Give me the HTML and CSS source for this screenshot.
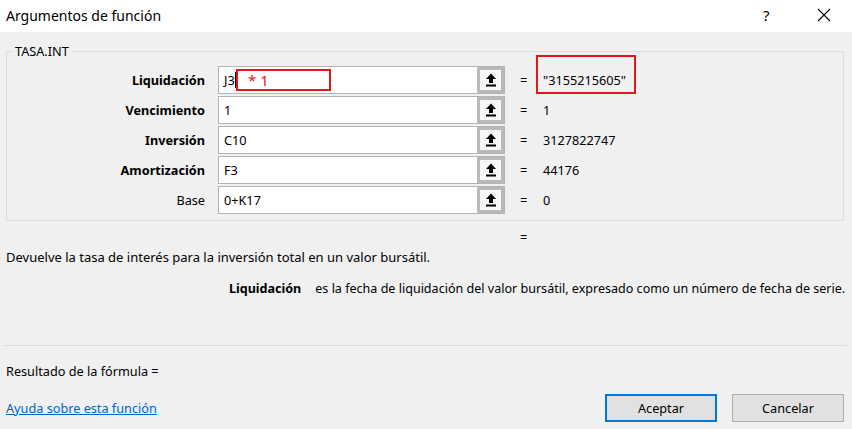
FILE: index.html
```html
<!DOCTYPE html>
<html lang="es">
<head>
<meta charset="utf-8">
<title>Argumentos de función</title>
<link rel="stylesheet" href="styles.css">
</head>
<body>
<div class="dialog">
  <header class="titlebar">
    <span class="title">Argumentos de función</span>
    <div class="title-actions">
      <span class="help">?</span>
      <svg class="close" width="14" height="14" viewBox="0 0 14 14"><path d="M1 1 L13 13 M13 1 L1 13" stroke="#000" stroke-width="1.1" fill="none"/></svg>
    </div>
  </header>
  <main class="body">
    <fieldset class="group">
      <legend class="legend">TASA.INT</legend>
      <div class="args">
        <div class="row">
          <label class="lbl bold">Liquidación</label>
          <div class="field">
            <span class="val">J3</span><span class="caret"></span>
            <span class="mark-in">* 1</span>
            <span class="ref"><svg width="12" height="14" viewBox="0 0 12 14"><path d="M6 0.5 L11 6 H8 V10 H4 V6 H1 Z" fill="#000"/><rect x="1" y="11.5" width="10" height="2" fill="#000"/></svg></span>
          </div>
          <span class="eq">=</span>
          <span class="res">"3155215605"<span class="mark-out"></span></span>
        </div>
        <div class="row">
          <label class="lbl bold">Vencimiento</label>
          <div class="field">
            <span class="val">1</span>
            <span class="ref"><svg width="12" height="14" viewBox="0 0 12 14"><path d="M6 0.5 L11 6 H8 V10 H4 V6 H1 Z" fill="#000"/><rect x="1" y="11.5" width="10" height="2" fill="#000"/></svg></span>
          </div>
          <span class="eq">=</span>
          <span class="res">1</span>
        </div>
        <div class="row">
          <label class="lbl bold">Inversión</label>
          <div class="field">
            <span class="val">C10</span>
            <span class="ref"><svg width="12" height="14" viewBox="0 0 12 14"><path d="M6 0.5 L11 6 H8 V10 H4 V6 H1 Z" fill="#000"/><rect x="1" y="11.5" width="10" height="2" fill="#000"/></svg></span>
          </div>
          <span class="eq">=</span>
          <span class="res">3127822747</span>
        </div>
        <div class="row">
          <label class="lbl bold">Amortización</label>
          <div class="field">
            <span class="val">F3</span>
            <span class="ref"><svg width="12" height="14" viewBox="0 0 12 14"><path d="M6 0.5 L11 6 H8 V10 H4 V6 H1 Z" fill="#000"/><rect x="1" y="11.5" width="10" height="2" fill="#000"/></svg></span>
          </div>
          <span class="eq">=</span>
          <span class="res">44176</span>
        </div>
        <div class="row">
          <label class="lbl">Base</label>
          <div class="field">
            <span class="val">0+K17</span>
            <span class="ref"><svg width="12" height="14" viewBox="0 0 12 14"><path d="M6 0.5 L11 6 H8 V10 H4 V6 H1 Z" fill="#000"/><rect x="1" y="11.5" width="10" height="2" fill="#000"/></svg></span>
          </div>
          <span class="eq">=</span>
          <span class="res">0</span>
        </div>
      </div>
    </fieldset>
    <div class="total-eq">=</div>
    <p class="desc">Devuelve la tasa de interés para la inversión total en un valor bursátil.</p>
    <p class="argdesc"><b class="argname">Liquidación</b><span>es la fecha de liquidación del valor bursátil, expresado como un número de fecha de serie.</span></p>
    <hr class="sep">
    <p class="result">Resultado de la fórmula =</p>
    <div class="footer">
      <a class="helplink" href="#">Ayuda sobre esta función</a>
      <div class="buttons">
        <button class="btn primary">Aceptar</button>
        <button class="btn">Cancelar</button>
      </div>
    </div>
  </main>
</div>
</body>
</html>
```
FILE: styles.css
```css
* { box-sizing: border-box; }
html, body { margin: 0; padding: 0; }
body {
  width: 852px;
  height: 429px;
  background: #f0f0f0;
  font-family: "Noto Sans", "Open Sans", "Liberation Sans", sans-serif;
  font-size: 12.7px;
  color: #000;
  overflow: hidden;
}
.dialog { width: 852px; height: 429px; display: flex; flex-direction: column; }
.titlebar {
  height: 32px;
  background: #fff;
  display: flex;
  align-items: center;
  justify-content: space-between;
  padding: 0 0 2px 6px;
}
.title { font-size: 14px; }
.title-actions { display: flex; align-items: center; }
.help { font-size: 15px; width: 58px; padding-left: 4px; }
.close { margin-right: 21px; }

.body { flex: 1; display: flex; flex-direction: column; }
.group {
  margin: 12px 8px 0 6px;
  padding: 10px 0 6px 0;
  border: 1px solid #dcdcdc;
  min-width: 0;
}
.legend { padding: 0 3px; margin-left: 5px; font-size: 12.7px; line-height: 14px; }
.args { display: flex; flex-direction: column; gap: 2px; margin-top: -2px; }
.row {
  display: grid;
  grid-template-columns: 211px 287px 31px 1fr;
  align-items: center;
  height: 28px;
}
.lbl { text-align: right; padding-right: 13px; }
.bold { font-weight: bold; }
.field {
  position: relative;
  height: 28px;
  background: #fff;
  border: 1px solid #b4b4b4;
  display: flex;
  align-items: center;
  padding-left: 5px;
}
.val { flex: 1; }
.caret { position: absolute; left: 16px; top: 5px; width: 1px; height: 16px; background: #000; }
.mark-in {
  position: absolute;
  left: 17px;
  top: 2px;
  width: 95px;
  height: 22px;
  border: 2px solid #e8141c;
  color: #e8141c;
  font-size: 15px;
  line-height: 18px;
  padding-left: 10px;
}
.ref {
  position: absolute;
  right: 0;
  top: 0;
  width: 27px;
  height: 26px;
  border: 3px solid #b9b9b9;
  background: #f7f7f7;
  display: flex;
  align-items: center;
  justify-content: center;
}
.eq { padding-left: 15px; }
.res { position: relative; padding-left: 7px; }
.mark-out {
  position: absolute;
  left: 0;
  top: -16px;
  width: 100px;
  height: 39px;
  border: 2px solid #e8141c;
}
.total-eq { padding-left: 520px; height: 20px; line-height: 20px; margin-top: 6px; }
.desc { margin: 0 0 0 6px; height: 20px; line-height: 20px; font-size: 13px; }
.argdesc { margin: 12px 0 0 229px; height: 20px; line-height: 20px; white-space: nowrap; font-size: 12.55px; }
.argname { margin-right: 14px; }
.sep { margin: 46px 5px 0 4px; border: 0; border-top: 1px solid #dcdcdc; height: 0; }
.result { margin: 15px 0 0 6px; line-height: 20px; height: 20px; }
.footer { display: flex; align-items: center; justify-content: space-between; margin-top: 13px; padding: 0 8px 0 6px; }
.helplink { color: #0066cc; text-decoration: underline; }
.buttons { display: flex; gap: 15px; }
.btn {
  width: 112px;
  height: 28px;
  background: #e1e1e1;
  border: 1px solid #adadad;
  font-family: inherit;
  font-size: 12.7px;
  color: #000;
  padding: 0;
}
.btn.primary { border: 2px solid #0078d7; }
```
